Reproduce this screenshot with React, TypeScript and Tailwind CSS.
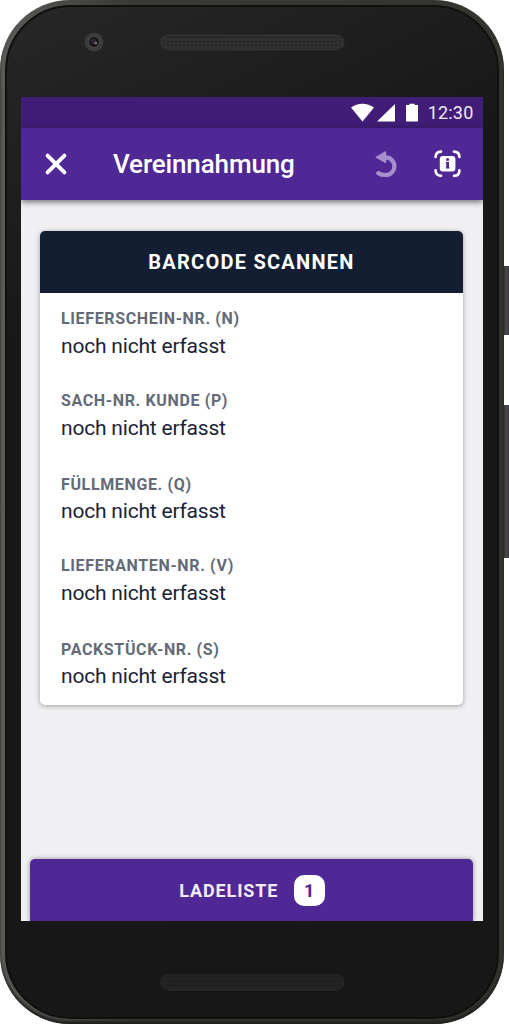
import React from 'react';

type Field = { label: string; value: string; nudge?: boolean };

const fields: Field[] = [
  { label: 'LIEFERSCHEIN-NR. (N)', value: 'noch nicht erfasst' },
  { label: 'SACH-NR. KUNDE (P)', value: 'noch nicht erfasst' },
  { label: 'FÜLLMENGE. (Q)', value: 'noch nicht erfasst', nudge: true },
  { label: 'LIEFERANTEN-NR. (V)', value: 'noch nicht erfasst' },
  { label: 'PACKSTÜCK-NR. (S)', value: 'noch nicht erfasst', nudge: true },
];

function Speaker({ dim = false }: { dim?: boolean }) {
  return (
    <svg width="185" height="17" viewBox="0 0 185 17">
      <defs>
        <pattern id={dim ? 'meshDim' : 'mesh'} width="4" height="4" patternUnits="userSpaceOnUse" x="2.5" y="2">
          <circle cx="1.2" cy="1.2" r="0.8" fill={dim ? '#151515' : '#161616'} />
          <circle cx="3.2" cy="3.2" r="0.4" fill={dim ? '#262626' : '#373737'} />
        </pattern>
      </defs>
      <rect x="0" y="0.3" width="184.5" height="15.7" rx="7.85" fill={dim ? '#232323' : '#303030'} />
      <rect x="3" y="2" width="179" height="12.5" rx="6" fill={dim ? 'url(#meshDim)' : 'url(#mesh)'} />
      <path d="M8 16H177" stroke={dim ? '#353535' : '#343434'} strokeWidth="0.8" />
    </svg>
  );
}

function Camera() {
  return (
    <svg width="20" height="20" viewBox="0 0 20 20">
      <circle cx="10" cy="10" r="9.5" fill="#3b3b3b" />
      <circle cx="10" cy="10" r="6.6" fill="#444444" />
      <circle cx="10" cy="10" r="5" fill="#171418" />
      <circle cx="9.3" cy="9.3" r="3" fill="#29242d" />
      <circle cx="11.8" cy="11.2" r="1.4" fill="#806b73" />
    </svg>
  );
}

function StatusBar() {
  return (
    <div className="flex h-[31px] shrink-0 items-center justify-end bg-[#411d77] pr-[9px]">
      <svg width="68" height="20" viewBox="0 0 68 20" fill="#fff" className="mr-[9px]">
        <path d="M0 4.6C6.5 -0.6 16.5 -0.6 23 4.6L11.5 18.6Z" />
        <path d="M44 0.9V18.6H26Z" />
        <path d="M55 2H58.4V0.7H63.6V2H67V18.6H55Z" />
      </svg>
      <span className="text-[18px] leading-[31px] tracking-[0.2px] text-[#efe9f7]">12:30</span>
    </div>
  );
}

function AppBar() {
  return (
    <header className="z-10 flex h-[72px] shrink-0 items-center bg-[#4f2896] pr-[20px] pl-[23px] shadow-[0_2px_6px_rgba(0,0,0,0.55)]">
      <svg width="24" height="24" viewBox="0 0 24 24" stroke="#fff" strokeWidth="4" strokeLinecap="round">
        <path d="M3.6 3.6L20.4 20.4M20.4 3.6L3.6 20.4" />
      </svg>
      <h1 className="ml-[45px] text-[26px] leading-none font-medium tracking-[-0.13px] text-white">Vereinnahmung</h1>
      <svg width="24" height="30" viewBox="0 0 24 30" className="ml-auto" fill="none" stroke="#a78fce">
        <path d="M12.6 2.8V13.4L3.2 8.3Z" fill="#a78fce" strokeWidth="1.2" strokeLinejoin="round" />
        <path d="M12.6 8.4A8.8 8.8 0 0 1 12.6 26C10 26 7.6 25.6 5.2 24.1" strokeWidth="4.2" strokeLinecap="round" />
      </svg>
      <svg width="30" height="30" viewBox="0 0 30 30" className="ml-[36px]" fill="none">
        <path d="M2.6 8C2.6 4.6 4.6 2.6 8 2.6M21 2.6C24.4 2.6 26.4 4.6 26.4 8M26.4 21.4C26.4 24.8 24.4 26.8 21 26.8M8 26.8C4.6 26.8 2.6 24.8 2.6 21.4" stroke="#fff" strokeWidth="2.7" strokeLinecap="round" />
        <rect x="6.8" y="7" width="15.6" height="15.6" rx="3" fill="#fff" />
        <circle cx="14.6" cy="10.4" r="1.5" fill="#4f2896" />
        <path d="M12.9 13H16V18.4H16.5V19.6H12.7V18.4H13.2V14.4H12.9Z" fill="#4f2896" />
      </svg>
    </header>
  );
}

function ScanCard() {
  return (
    <section className="mr-[19.5px] ml-[19px] mt-[31px] h-[474px] overflow-hidden rounded-[5px] bg-white shadow-[0_1px_5px_rgba(0,0,0,0.35)]">
      <div className="flex h-[61.5px] items-center justify-center bg-[#131e32] text-[20px] font-bold tracking-[1.25px] text-white">
        BARCODE SCANNEN
      </div>
      <dl>
        {fields.map((f) => (
          <div key={f.label} className="h-[82.5px] pt-[15px] pl-[21px]">
            <dt className={`h-[22px] text-[16px] leading-[22px] font-bold tracking-[0.64px] text-[#646a77] ${f.nudge ? 'relative top-px' : ''}`}>
              {f.label}
            </dt>
            <dd className="mt-[3px] text-[21px] leading-[26px] tracking-[-0.2px] text-[#1a2336]">{f.value}</dd>
          </div>
        ))}
      </dl>
    </section>
  );
}

function LoadListButton() {
  return (
    <button className="mr-[9.5px] ml-[9px] mt-auto flex h-[62px] items-center justify-center rounded-t-[5px] bg-[#4f2896] pl-px shadow-[0_0_5px_rgba(0,0,0,0.4)]">
      <span className="text-[18px] font-bold tracking-[0.85px] text-[#f1ecf8]">LADELISTE</span>
      <span className="ml-[15.5px] flex h-[31px] w-[31px] items-center justify-center rounded-[10px] bg-white text-[18px] font-bold text-[#4f2896]">1</span>
    </button>
  );
}

export default function App() {
  return (
    <div className="flex h-[1024px] w-[509px] overflow-hidden bg-white font-['Roboto',sans-serif]">
      <div className="h-[1024px] w-[503.5px] shrink-0 rounded-[70px] bg-[linear-gradient(90deg,#5b5c59_0,#3a3b37_25%,#33342e_100%)] px-[4.5px] pt-[5px] pb-[5px] shadow-[inset_0_-3px_3px_#1f201e]">
        <div className="flex h-full flex-col rounded-[66px] border-2 border-[#10110f] bg-[linear-gradient(155deg,#272727_0%,#181818_27%,#171717_100%)] pr-[14.5px] pl-[14.5px]">
          <div className="flex h-[90px] shrink-0 items-start pt-[25px] pl-[63px]">
            <Camera />
            <div className="ml-[56px] pt-[2px]">
              <Speaker />
            </div>
          </div>
          <main className="flex h-[824px] w-[461.5px] shrink-0 flex-col overflow-hidden bg-[#f0f0f3]">
            <StatusBar />
            <AppBar />
            <ScanCard />
            <LoadListButton />
          </main>
          <div className="pt-[53px] pl-[139px]">
            <Speaker dim />
          </div>
        </div>
      </div>
      <div className="flex w-[5.5px] flex-col pt-[266px]">
        <div className="h-[69px] bg-[linear-gradient(90deg,#333237,#4c4950_45%,#3b393e)]" />
        <div className="mt-[70px] h-[153px] bg-[linear-gradient(90deg,#333237,#4c4950_45%,#3b393e)]" />
      </div>
    </div>
  );
}
